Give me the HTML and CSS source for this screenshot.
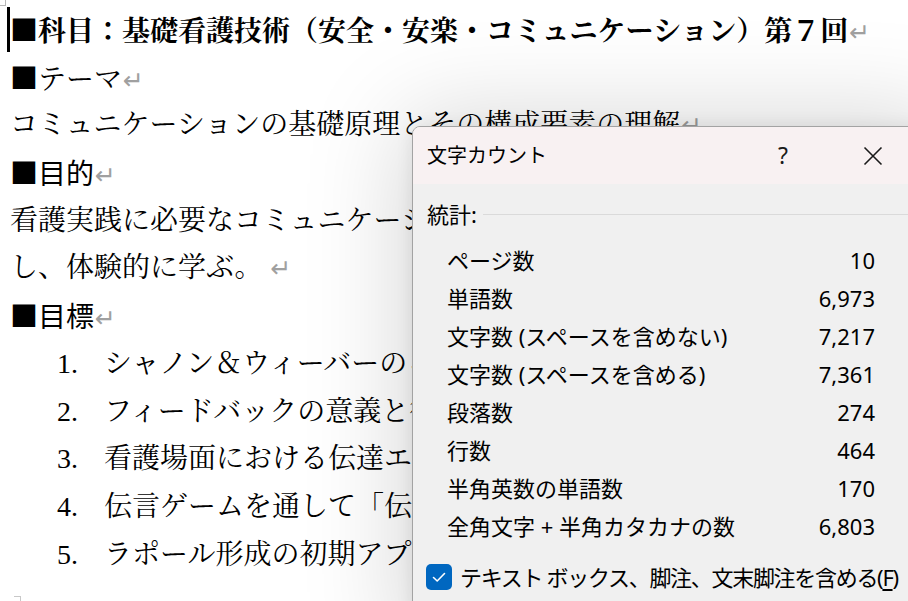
FILE: index.html
```html
<!DOCTYPE html>
<html lang="ja">
<head>
<meta charset="utf-8">
<title>文字カウント</title>
<link rel="stylesheet" href="styles.css">
</head>
<body>
<div class="page">
  <span class="corner-mark"></span>
  <span class="caret"></span>
  <p class="para title-line"><span class="sq">■</span>科目：基礎看護技術（安全・安楽・コミュニケーション）第７回<span class="pm">↵</span></p>
  <p class="para"><span class="sq">■</span>テーマ<span class="pm">↵</span></p>
  <p class="para">コミュニケーションの基礎原理とその構成要素の理解<span class="pm">↵</span></p>
  <p class="para gothic"><span class="sq">■</span>目的<span class="pm">↵</span></p>
  <p class="para">看護実践に必要なコミュニケーションの基礎理論と技法を理解</p>
  <p class="para">し、体験的に学ぶ。<span class="pm spaced">↵</span></p>
  <p class="para gothic"><span class="sq">■</span>目標<span class="pm">↵</span></p>
  <ol class="goals">
    <li><span class="num">1.</span><span class="txt">シャノン＆ウィーバーのコミュニケーションモデルを説明できる。</span></li>
    <li><span class="num">2.</span><span class="txt">フィードバックの意義と役割を理解する。</span></li>
    <li><span class="num">3.</span><span class="txt">看護場面における伝達エラーの要因を考える。</span></li>
    <li><span class="num">4.</span><span class="txt">伝言ゲームを通して「伝わる」ことを体験する。</span></li>
    <li><span class="num">5.</span><span class="txt">ラポール形成の初期アプローチを学ぶ。</span></li>
  </ol>
  <span class="bottom-mark"></span>
</div>

<div class="dialog">
  <div class="titlebar">
    <span class="dlg-title">文字カウント</span>
    <span class="help">?</span>
    <span class="close">
      <svg width="20" height="20" viewBox="0 0 20 20"><path d="M1.5 1.5 L18.5 18.5 M18.5 1.5 L1.5 18.5" stroke="#1a1a1a" stroke-width="1.6" fill="none"/></svg>
    </span>
  </div>
  <div class="dlg-body">
    <div class="section">統計:</div>
    <div class="stats">
      <div class="row"><span>ページ数</span><span>10</span></div>
      <div class="row"><span>単語数</span><span>6,973</span></div>
      <div class="row"><span>文字数 (スペースを含めない)</span><span>7,217</span></div>
      <div class="row"><span>文字数 (スペースを含める)</span><span>7,361</span></div>
      <div class="row"><span>段落数</span><span>274</span></div>
      <div class="row"><span>行数</span><span>464</span></div>
      <div class="row"><span>半角英数の単語数</span><span>170</span></div>
      <div class="row"><span>全角文字 + 半角カタカナの数</span><span>6,803</span></div>
    </div>
    <label class="check-row">
      <span class="checkbox">
        <svg width="26" height="26" viewBox="0 0 26 26"><path d="M7.5 13.5 L11.2 17 L18.5 9.5" stroke="#fff" stroke-width="1.6" fill="none" stroke-linecap="round" stroke-linejoin="round"/></svg>
      </span>
      <span class="check-label">テキスト ボックス、脚注、文末脚注を含める(<span class="u">F</span>)</span>
    </label>
  </div>
</div>
</body>
</html>
```

FILE: styles.css
```css
* { box-sizing: border-box; }

html, body {
  margin: 0;
  padding: 0;
}

body {
  width: 908px;
  height: 601px;
  overflow: hidden;
  position: relative;
  background: #ffffff;
}

.page {
  position: relative;
  height: 601px;
  padding: 6px 0 0 10px;
  font-family: "Liberation Serif", "Noto Serif CJK JP", "Noto Sans CJK JP", serif;
  font-size: 28px;
  color: #000;
}

.para {
  margin: 0;
  height: 47.7px;
  line-height: 47.7px;
  white-space: nowrap;
  overflow: visible;
}

.title-line {
  font-weight: bold;
}

.gothic {
  font-family: "Noto Sans CJK JP", sans-serif;
}

.sq {
  font-family: "Noto Sans CJK JP", sans-serif;
}

.pm {
  font-family: "DejaVu Sans", sans-serif;
  font-weight: normal;
  font-size: 25px;
  letter-spacing: 0;
  color: #a0a0a0;
  margin-left: 1px;
}

.pm.spaced {
  margin-left: 8px;
}

.goals {
  list-style: none;
  margin: 0;
  padding: 0 0 0 47px;
}

.goals li {
  display: flex;
  height: 47.7px;
  line-height: 47.7px;
  white-space: nowrap;
}

.num {
  width: 47px;
  flex: none;
}

.caret {
  position: absolute;
  left: 7px;
  top: 7px;
  width: 3px;
  height: 45px;
  background: #000;
}

.corner-mark {
  position: absolute;
  left: 0;
  top: 0;
  width: 6px;
  height: 6px;
  border-right: 1px solid #b8b8b8;
  border-bottom: 1px solid #b8b8b8;
}

.bottom-mark {
  position: absolute;
  left: 14px;
  top: 596px;
  width: 7px;
  height: 6px;
  border-top: 1px solid #c8c8c8;
  border-right: 1px solid #c8c8c8;
}

/* dialog window */
.dialog {
  position: absolute;
  left: 412px;
  top: 126px;
  width: 530px;
  height: 520px;
  background: #f0f0f0;
  border: 1px solid #a3a3a3;
  border-radius: 8px 8px 0 0;
  box-shadow: 0 0 100px 8px rgba(0, 0, 0, 0.17), 0 0 18px rgba(0, 0, 0, 0.08);
  font-family: "Noto Sans", "Noto Sans CJK JP", sans-serif;
  color: #000;
  overflow: hidden;
}

.titlebar {
  height: 57px;
  background: #f8f1f2;
  display: flex;
  align-items: center;
  padding: 0 48px 0 14px;
  font-size: 20px;
  line-height: 1;
}

.dlg-title {
  flex: 1;
}

.help {
  width: 40px;
  text-align: center;
  font-size: 23px;
  color: #1a1a1a;
}

.close {
  width: 40px;
  margin-left: 50px;
  display: flex;
  justify-content: center;
  align-items: center;
}

.dlg-body {
  padding: 11px 0 0 14px;
  font-size: 22px;
}

.section {
  display: flex;
  align-items: center;
  height: 38px;
  line-height: 38px;
}

.section::after {
  content: "";
  flex: 1;
  height: 1px;
  margin-left: 6px;
  background: #dadada;
}

.stats {
  margin: 8px 0 0 20px;
  width: 428px;
}

.row {
  display: flex;
  justify-content: space-between;
  height: 38px;
  line-height: 38px;
  white-space: nowrap;
}

.check-row {
  display: flex;
  align-items: center;
  gap: 8px;
  margin: 19px 0 0 -1px;
  height: 26px;
  white-space: nowrap;
}

.checkbox {
  width: 26px;
  height: 26px;
  flex: none;
  border-radius: 5px;
  background: #0067c0;
  display: flex;
}

.check-label {
  line-height: 26px;
  letter-spacing: -1.3px;
}

.u {
  text-decoration: underline;
  text-underline-offset: 3px;
}
```
